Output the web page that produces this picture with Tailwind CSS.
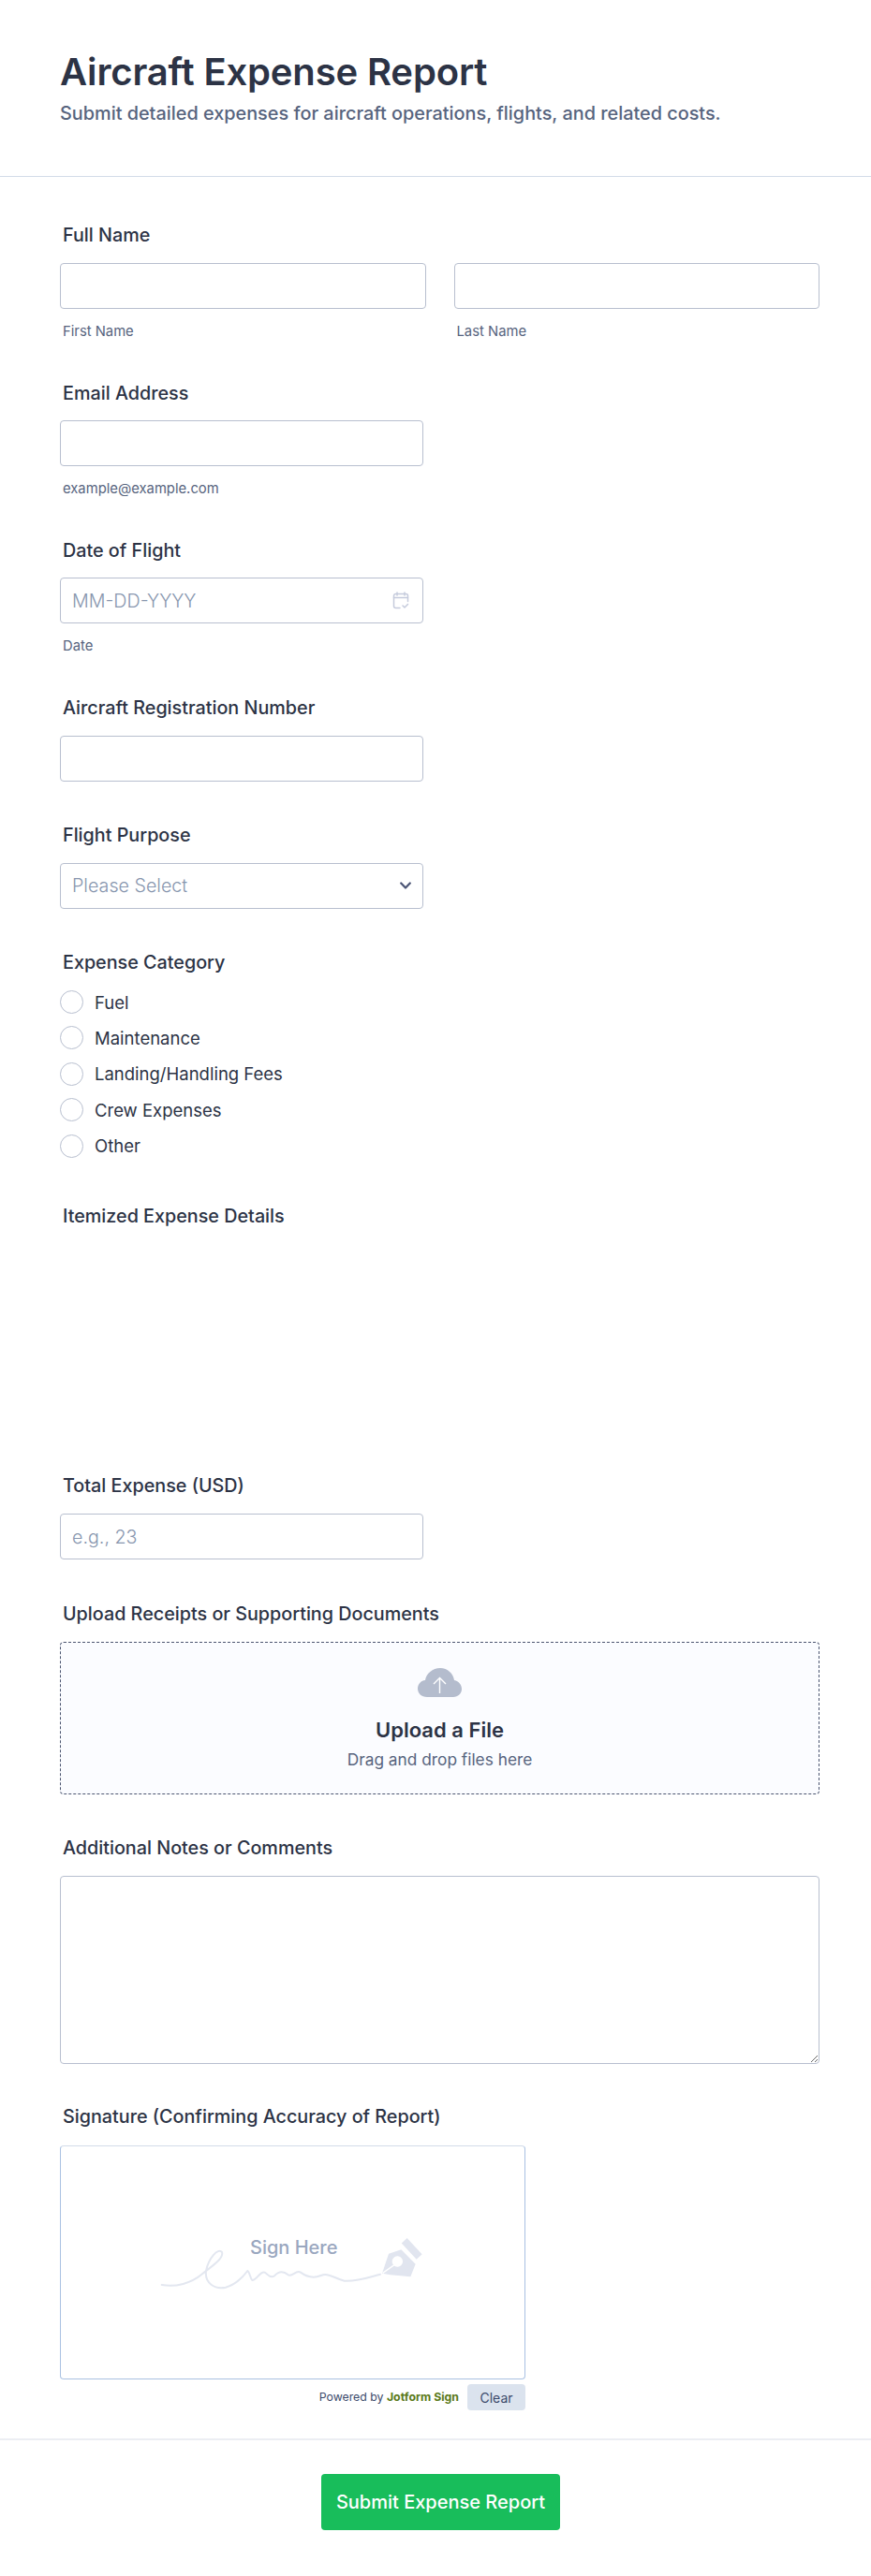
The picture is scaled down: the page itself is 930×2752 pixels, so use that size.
<!DOCTYPE html>
<html lang="en">
<head>
  <meta charset="UTF-8">
  <meta name="viewport" content="width=device-width, initial-scale=1.0">
  <title>Aircraft Expense Report</title>
  <script src="https://cdn.jsdelivr.net/npm/@tailwindcss/browser@4"></script>
</head>
<body class="bg-white font-['Inter',sans-serif] text-[#2c3345]">
  <form class="w-[930px] h-[2752px] flex flex-col">
    <!-- header -->
    <header class="h-[189px] border-b border-[#d3dce8] pt-[55px] px-[64px]">
      <h1 class="text-[40px] leading-[44px] font-semibold tracking-[-0.15px]">Aircraft Expense Report</h1>
      <p class="mt-[8px] text-[19.85px] leading-[28px] font-medium text-[#57647e]">Submit detailed expenses for aircraft operations, flights, and related costs.</p>
    </header>

    <main class="flex-1 px-[64px] pt-[50px]">
      <!-- full name -->
      <div class="h-[169px]">
        <label class="block px-[3px] h-[24px] text-[19.75px] leading-[24px] font-medium">Full Name</label>
        <div class="mt-[18px] grid grid-cols-2 gap-[30px] w-[811px]">
          <div>
            <input type="text" class="block w-full h-[49px] bg-white border border-[#b8bfcf] rounded-[4px] px-[12px]">
            <span class="block mt-[15px] px-[3px] text-[14.8px] leading-[18px] text-[#57647e]">First Name</span>
          </div>
          <div>
            <input type="text" class="block w-full h-[49px] bg-white border border-[#b8bfcf] rounded-[4px] px-[12px]">
            <span class="block mt-[15px] px-[3px] text-[14.8px] leading-[18px] text-[#57647e]">Last Name</span>
          </div>
        </div>
      </div>

      <!-- email -->
      <div class="h-[168px]">
        <label class="block px-[3px] h-[24px] text-[19.75px] leading-[24px] font-medium">Email Address</label>
        <input type="email" class="block mt-[17px] w-[388px] h-[49px] bg-white border border-[#b8bfcf] rounded-[4px] px-[12px]">
        <span class="block mt-[15px] px-[3px] text-[14.8px] leading-[18px] text-[#57647e]">example@example.com</span>
      </div>

      <!-- date -->
      <div class="h-[168px]">
        <label class="block px-[3px] h-[24px] text-[19.75px] leading-[24px] font-medium">Date of Flight</label>
        <div class="relative mt-[17px] w-[388px]">
          <input type="text" placeholder="MM-DD-YYYY" class="block w-full h-[49px] bg-white border border-[#b8bfcf] rounded-[4px] px-[12px] text-[19.7px] font-light placeholder:text-[#8796ae]">
          <svg class="absolute right-[15px] top-[15px]" width="18" height="19" viewBox="0 0 18 19" fill="none" stroke="#c5cbdc" stroke-width="1.5" stroke-linecap="round" stroke-linejoin="round">
            <path d="M8 17.5H3.5a2 2 0 0 1-2-2V4.5a2 2 0 0 1 2-2h11a2 2 0 0 1 2 2v6"/>
            <path d="M1.5 6.5h15"/>
            <path d="M5 1v3M13 1v3"/>
            <path d="M11 15l2 2 3.5-3.5"/>
          </svg>
        </div>
        <span class="block mt-[15px] px-[3px] text-[14.8px] leading-[18px] text-[#57647e]">Date</span>
      </div>

      <!-- registration -->
      <div class="h-[136px]">
        <label class="block px-[3px] h-[24px] text-[19.75px] leading-[24px] font-medium">Aircraft Registration Number</label>
        <input type="text" class="block mt-[18px] w-[388px] h-[49px] bg-white border border-[#b8bfcf] rounded-[4px] px-[12px]">
      </div>

      <!-- purpose -->
      <div class="h-[136px]">
        <label class="block px-[3px] h-[24px] text-[19.75px] leading-[24px] font-medium">Flight Purpose</label>
        <div class="relative mt-[18px] w-[388px]">
          <select class="block appearance-none w-full h-[49px] bg-white border border-[#b8bfcf] rounded-[4px] px-[12px] text-[19.7px] font-light text-[#8796ae]">
            <option>Please Select</option>
          </select>
          <svg class="absolute right-[13px] top-[20px]" width="12" height="9" viewBox="0 0 12 9" fill="none" stroke="#4b5575" stroke-width="2.2" stroke-linecap="round" stroke-linejoin="round">
            <path d="M1.2 1.5L6 6.5l4.8-5"/>
          </svg>
        </div>
      </div>

      <!-- category -->
      <div class="h-[271px]">
        <label class="block px-[3px] h-[24px] text-[19.75px] leading-[24px] font-medium">Expense Category</label>
        <ul class="mt-[18px] flex flex-col gap-[13.4px] text-[18.5px] leading-[24px]">
          <li class="flex items-center gap-[12px]"><span class="w-[25px] h-[25px] rounded-full border border-[#b8bfcf] bg-white"></span>Fuel</li>
          <li class="flex items-center gap-[12px]"><span class="w-[25px] h-[25px] rounded-full border border-[#b8bfcf] bg-white"></span>Maintenance</li>
          <li class="flex items-center gap-[12px]"><span class="w-[25px] h-[25px] rounded-full border border-[#b8bfcf] bg-white"></span>Landing/Handling Fees</li>
          <li class="flex items-center gap-[12px]"><span class="w-[25px] h-[25px] rounded-full border border-[#b8bfcf] bg-white"></span>Crew Expenses</li>
          <li class="flex items-center gap-[12px]"><span class="w-[25px] h-[25px] rounded-full border border-[#b8bfcf] bg-white"></span>Other</li>
        </ul>
      </div>

      <!-- itemized, table widget is empty -->
      <div class="h-[288px]">
        <label class="block px-[3px] h-[24px] text-[19.75px] leading-[24px] font-medium">Itemized Expense Details</label>
      </div>

      <!-- total -->
      <div class="h-[137px]">
        <label class="block px-[3px] h-[24px] text-[19.75px] leading-[24px] font-medium">Total Expense (USD)</label>
        <input type="text" placeholder="e.g., 23" class="block mt-[18px] w-[388px] h-[49px] bg-white border border-[#b8bfcf] rounded-[4px] px-[12px] text-[19.7px] font-light placeholder:text-[#8796ae]">
      </div>

      <!-- upload -->
      <div class="h-[250px]">
        <label class="block px-[3px] h-[24px] text-[19.75px] leading-[24px] font-medium">Upload Receipts or Supporting Documents</label>
        <div class="mt-[18px] w-[811px] h-[163px] bg-[#fbfcff] border border-dashed border-[#4b5570] rounded-[4px] flex flex-col items-center pt-[27px]">
          <svg width="47" height="31" viewBox="0 0 47 31">
            <path fill="#b4bccd" d="M10 31C4 31 0 27 0 22C0 17 4 13 8 13C9 6 16 0 24 0C32 0 38 6 39 13C44 14 47 18 47 22.5C47 27 43 31 38 31Z"/>
            <path fill="none" stroke="#fff" stroke-width="1.4" d="M23.5 27V10.5M17 17l6.5-6.5L30 17"/>
          </svg>
          <strong class="mt-[21px] text-[22px] leading-[28px] font-semibold">Upload a File</strong>
          <span class="mt-[6px] text-[17.3px] leading-[24px] text-[#57647e]">Drag and drop files here</span>
        </div>
      </div>

      <!-- notes -->
      <div class="h-[287px]">
        <label class="block px-[3px] h-[24px] text-[19.75px] leading-[24px] font-medium">Additional Notes or Comments</label>
        <textarea class="block mt-[18px] w-[811px] h-[201px] bg-white border border-[#b8bfcf] rounded-[4px] px-[12px]"></textarea>
      </div>

      <!-- signature -->
      <div>
        <label class="block px-[3px] h-[24px] text-[19.75px] leading-[24px] font-medium">Signature (Confirming Accuracy of Report)</label>
        <div class="relative mt-[19px] w-[497px] h-[250px] bg-white border border-[#a9c1e2] border-t-[#d3dce9] rounded-[4px] flex items-center justify-center">
          <svg class="mt-[8px] -ml-[3px]" width="300" height="100" viewBox="0 0 900 300">
            <path fill="none" stroke="#e3e7f0" stroke-width="6" stroke-linecap="round" d="M35 210C80 218 130 205 165 175C195 150 235 125 228 105C215 90 185 125 177 165C172 205 205 225 240 218C270 210 295 185 310 165C318 170 318 190 325 195C340 195 350 165 365 170C375 175 380 190 395 182C410 165 425 165 440 178C455 185 465 160 480 170C500 185 520 190 545 180C570 170 590 190 620 197C660 200 700 185 735 176"/>
            <path fill="#e1e5ef" fill-rule="evenodd" d="M741 173L762 110L802 97L848 143L832 184L768 178ZM790 118a17 17 0 1 0 .1 0Z"/>
            <path stroke="#fff" stroke-width="4" d="M743 172L780 146"/>
            <path stroke="#e1e5ef" stroke-width="24" d="M812 68L860 120"/>
          </svg>
          <span class="absolute left-[202px] top-[94px] text-[20px] leading-[28px] font-medium text-[#9aa7bf]">Sign Here</span>
        </div>
        <div class="mt-[5px] w-[497px] flex items-center justify-end gap-[9px]">
          <span class="text-[12.3px] leading-[16px] text-[#3c4a6b]">Powered by <b class="font-bold text-[#5b7a1a]">Jotform Sign</b></span>
          <button type="button" class="w-[62px] h-[28px] rounded-[4px] bg-[#dbe3ee] text-[14px] text-[#3c4a6b]">Clear</button>
        </div>
      </div>
    </main>

    <!-- footer -->
    <footer class="h-[147px] border-t-2 border-[#eceef3] pt-[36px] flex justify-center">
      <button type="submit" class="ml-[11px] w-[255px] h-[60px] rounded-[4px] bg-[#18bd5b] text-white text-[20px] font-medium">Submit Expense Report</button>
    </footer>
  </form>
</body>
</html>
